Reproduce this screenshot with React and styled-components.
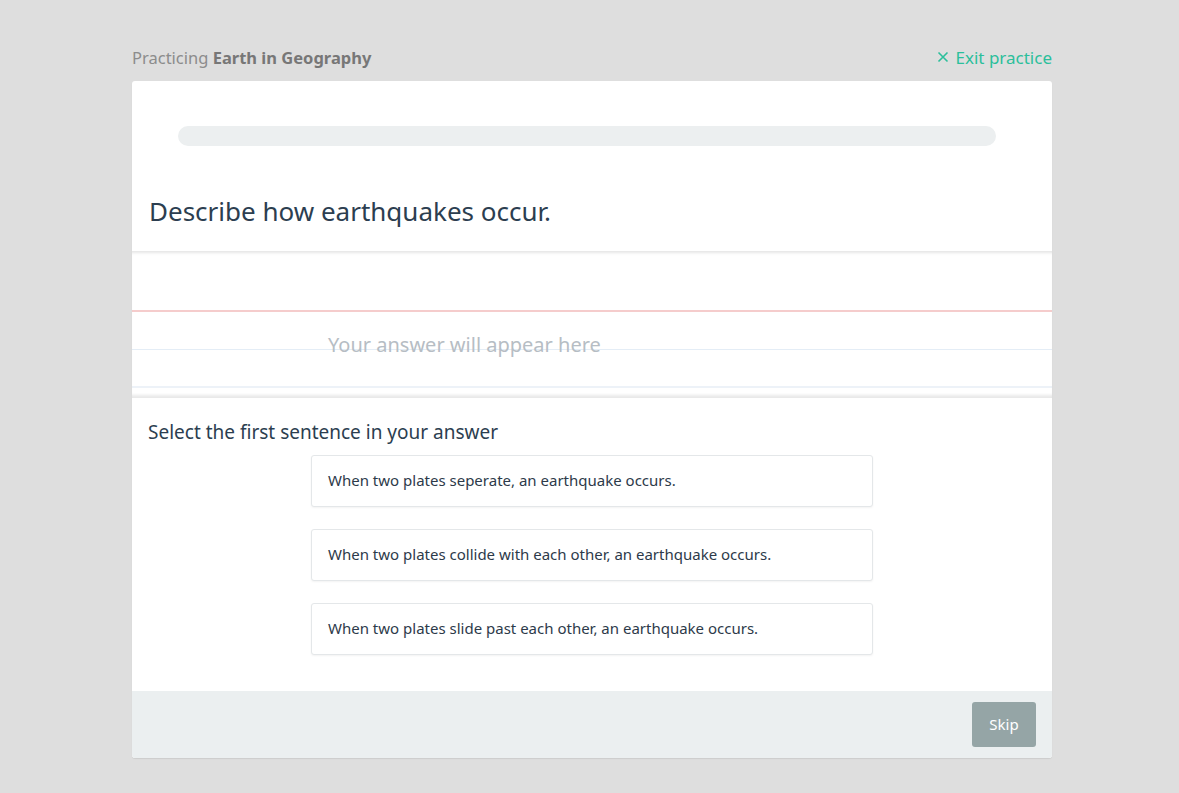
import React from 'react';
import styled, { createGlobalStyle } from 'styled-components';

const GlobalStyle = createGlobalStyle`
  body {
    margin: 0;
    background: #dedede;
    font-family: "Noto Sans", Lato, "Liberation Sans", sans-serif;
  }
`;

const Page = styled.div`
  min-height: 793px;
  padding-top: 45px;
  box-sizing: border-box;
`;

const Container = styled.div`
  width: 920px;
  margin-left: calc(50% - 457.5px);
`;

const TopBar = styled.div`
  display: flex;
  justify-content: space-between;
  align-items: center;
  height: 24px;
  margin-bottom: 12px;
  font-size: 16.5px;
`;

const Crumb = styled.div`
  color: #8c8c8c;

  strong {
    color: #777;
    font-weight: 700;
  }
`;

const ExitLink = styled.a`
  display: flex;
  align-items: center;
  gap: 7px;
  font-size: 17px;
  color: #2bbf9b;
  text-decoration: none;
  cursor: pointer;
`;

const Card = styled.div`
  background: #fff;
  border-radius: 3px;
  box-shadow: 0 1px 1px rgba(0, 0, 0, 0.08);
  overflow: hidden;
`;

const QuestionHead = styled.div`
  padding: 45px 56px 0 46px;
`;

const Progress = styled.div`
  height: 20px;
  border-radius: 10px;
  background: #eceff0;
`;

const Question = styled.h1`
  margin: 49px 0 0 -46px;
  padding: 0 0 24px 17px;
  font-size: 26px;
  line-height: 32px;
  font-weight: 400;
  color: #2c3e50;
`;

const AnswerArea = styled.div`
  height: 147px;
  box-sizing: border-box;
  padding: 82px 0 0 196px;
  background:
    linear-gradient(#f5cccc, #f5cccc) 0 59px / 100% 2px no-repeat,
    linear-gradient(#e4edf6, #e4edf6) 0 98px / 100% 1px no-repeat,
    linear-gradient(#edf2f8, #edf2f8) 0 135px / 100% 2px no-repeat,
    #fff;
  box-shadow:
    inset 0 4px 3px -2px rgba(0, 0, 0, 0.1),
    inset 0 -5px 3px -2px rgba(0, 0, 0, 0.09);
`;

const Placeholder = styled.div`
  font-size: 20px;
  line-height: 24px;
  color: #b6bdc4;
`;

const SelectSection = styled.div`
  padding: 22px 16px 36px;
`;

const Prompt = styled.div`
  font-size: 19px;
  line-height: 24px;
  color: #2c3e50;
  margin-bottom: 11px;
`;

const Options = styled.div`
  display: flex;
  flex-direction: column;
  align-items: center;
  gap: 22px;
`;

const Option = styled.button`
  width: 562px;
  height: 52px;
  box-sizing: border-box;
  padding: 0 16px 3px;
  text-align: left;
  background: #fff;
  border: 1px solid #e4e7e9;
  border-radius: 3px;
  box-shadow: 0 1px 2px rgba(0, 0, 0, 0.05);
  font-family: inherit;
  font-size: 15px;
  color: #2d3a4a;
  cursor: pointer;
`;

const Footer = styled.div`
  display: flex;
  justify-content: flex-end;
  padding: 11px 16px;
  background: #ebeff0;
`;

const SkipButton = styled.button`
  width: 64px;
  height: 45px;
  padding-bottom: 2px;
  border: none;
  border-radius: 3px;
  background: #95a5a6;
  color: #fff;
  font-family: inherit;
  font-size: 15px;
  cursor: pointer;
`;

const sentences = [
  'When two plates seperate, an earthquake occurs.',
  'When two plates collide with each other, an earthquake occurs.',
  'When two plates slide past each other, an earthquake occurs.',
];

const CloseIcon = () => (
  <svg width="12" height="12" viewBox="0 0 12 12" fill="none" stroke="currentColor" strokeWidth="1.6">
    <path d="M1.5 1.5l9 9M10.5 1.5l-9 9" />
  </svg>
);

export default function App() {
  return (
    <Page>
      <GlobalStyle />
      <Container>
        <TopBar>
          <Crumb>
            Practicing <strong>Earth in Geography</strong>
          </Crumb>
          <ExitLink>
            <CloseIcon />
            Exit practice
          </ExitLink>
        </TopBar>

        <Card>
          <QuestionHead>
            <Progress />
            <Question>Describe how earthquakes occur.</Question>
          </QuestionHead>

          <AnswerArea>
            <Placeholder>Your answer will appear here</Placeholder>
          </AnswerArea>

          <SelectSection>
            <Prompt>Select the first sentence in your answer</Prompt>
            <Options>
              {sentences.map(s => (
                <Option key={s}>{s}</Option>
              ))}
            </Options>
          </SelectSection>

          <Footer>
            <SkipButton>Skip</SkipButton>
          </Footer>
        </Card>
      </Container>
    </Page>
  );
}
